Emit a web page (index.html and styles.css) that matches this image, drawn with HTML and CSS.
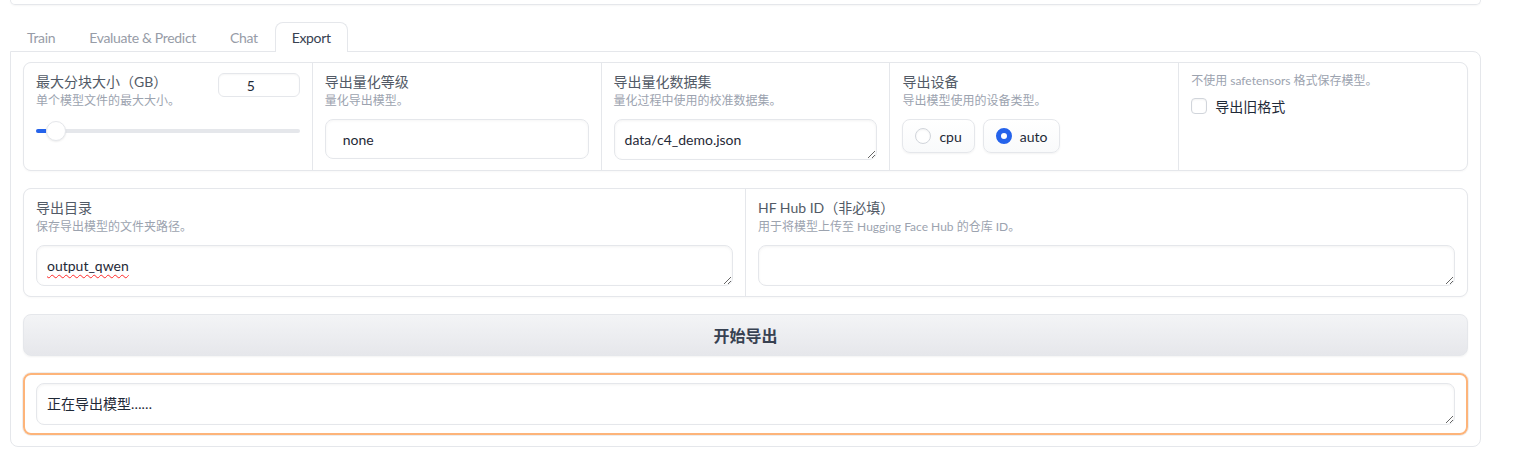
FILE: index.html
```html
<!DOCTYPE html>
<html lang="zh-CN">
<head>
<meta charset="utf-8">
<title>Export</title>
<link rel="stylesheet" href="styles.css">
</head>
<body>
<div class="app">
  <div class="prev-block"></div>
  <div class="tabs">
    <div class="tab-nav">
      <div class="tab">Train</div>
      <div class="tab">Evaluate &amp; Predict</div>
      <div class="tab">Chat</div>
      <div class="tab selected">Export</div>
    </div>
    <div class="tab-panel">
      <div class="form form-5">
        <div class="cell">
          <div class="slider-head">
            <div>
              <div class="label">最大分块大小（GB）</div>
              <div class="info">单个模型文件的最大大小。</div>
            </div>
            <div class="num">5</div>
          </div>
          <div class="slider">
            <div class="track"><div class="fill" style="width:10px"></div></div>
            <div class="thumb" style="left:10px"></div>
          </div>
        </div>
        <div class="cell">
          <div class="label">导出量化等级</div>
          <div class="info">量化导出模型。</div>
          <div class="dropdown">none</div>
        </div>
        <div class="cell">
          <div class="label">导出量化数据集</div>
          <div class="info">量化过程中使用的校准数据集。</div>
          <div class="textarea">data/c4_demo.json</div>
        </div>
        <div class="cell">
          <div class="label">导出设备</div>
          <div class="info">导出模型使用的设备类型。</div>
          <div class="radio-group">
            <div class="radio-opt"><span class="radio"></span><span>cpu</span></div>
            <div class="radio-opt"><span class="radio checked"></span><span>auto</span></div>
          </div>
        </div>
        <div class="cell">
          <div class="info">不使用 safetensors 格式保存模型。</div>
          <div class="check-row"><span class="checkbox"></span><span class="check-label">导出旧格式</span></div>
        </div>
      </div>

      <div class="form form-2">
        <div class="cell">
          <div class="label">导出目录</div>
          <div class="info">保存导出模型的文件夹路径。</div>
          <div class="textarea"><span class="misspelled">output_qwen</span></div>
        </div>
        <div class="cell">
          <div class="label">HF Hub ID（非必填）</div>
          <div class="info">用于将模型上传至 Hugging Face Hub 的仓库 ID。</div>
          <div class="textarea"></div>
        </div>
      </div>

      <div class="btn">开始导出</div>

      <div class="output-block">
        <div class="textarea tall">正在导出模型……</div>
      </div>
    </div>
  </div>
</div>
</body>
</html>
```
FILE: styles.css
```css
* { box-sizing: border-box; }

body {
  margin: 0;
  background: #ffffff;
  font-family: "Source Sans Pro", Lato, "Noto Sans CJK SC", sans-serif;
  color: #1f2937;
  font-size: 14px;
}

.app {
  margin-left: 10px;
  width: 1471px;
}

.prev-block {
  height: 5px;
  border: 1px solid #e5e7eb;
  border-top: none;
  border-radius: 0 0 8px 8px;
  box-shadow: 0 1px 2px rgba(0, 0, 0, 0.04);
}

.tab-nav {
  display: flex;
  margin-top: 17px;
}

.tab {
  position: relative;
  z-index: 1;
  height: 30px;
  margin-bottom: -1px;
  padding: 0 16px 1px;
  border: 1px solid transparent;
  border-bottom: none;
  border-radius: 8px 8px 0 0;
  display: flex;
  align-items: center;
  font-size: 14px;
  letter-spacing: -0.33px;
  color: #979ca7;
  background: transparent;
}

.tab.selected {
  border-color: #e5e7eb;
  background: #ffffff;
  color: #374151;
}

.tab-panel {
  border: 1px solid #e5e7eb;
  border-radius: 0 8px 8px 8px;
  padding: 10px 12px 11px;
  display: flex;
  flex-direction: column;
  gap: 17px;
}

.form {
  display: grid;
  gap: 1px;
  background: #e5e7eb;
  border: 1px solid #e5e7eb;
  border-radius: 8px;
  overflow: hidden;
  box-shadow: 0 1px 2px rgba(0, 0, 0, 0.03);
}

.form-5 { grid-template-columns: repeat(5, 1fr); }
.form-2 { grid-template-columns: repeat(2, 1fr); }

.cell {
  background: #ffffff;
  padding: 9px 12px 10px;
  min-width: 0;
}

.label {
  font-size: 14px;
  line-height: 20px;
  color: #525a66;
}

.info {
  font-size: 12px;
  line-height: 18px;
  color: #9ca3af;
}

.slider-head {
  display: flex;
  justify-content: space-between;
  align-items: flex-start;
}

.num {
  width: 82px;
  height: 24px;
  margin-top: 1px;
  padding-right: 16px;
  border: 1px solid #e5e7eb;
  border-radius: 6px;
  display: flex;
  align-items: center;
  justify-content: center;
  font-size: 14px;
  color: #1f2937;
  box-shadow: inset 0 1px 2px rgba(0, 0, 0, 0.04);
}

.slider {
  position: relative;
  height: 42px;
  display: flex;
  align-items: center;
}

.track {
  width: 100%;
  height: 4px;
  border-radius: 2px;
  background: #e5e7eb;
  display: flex;
}

.fill {
  height: 4px;
  border-radius: 2px 0 0 2px;
  background: #2563eb;
}

.thumb {
  position: absolute;
  top: 11px;
  width: 20px;
  height: 20px;
  border-radius: 50%;
  background: #ffffff;
  border: 1px solid #e5e7eb;
  box-shadow: 0 1px 2px rgba(0, 0, 0, 0.08);
}

.dropdown {
  margin-top: 9px;
  height: 40px;
  border: 1px solid #e5e7eb;
  border-radius: 8px;
  padding: 0 17px;
  display: flex;
  align-items: center;
  font-size: 14px;
  color: #1f2937;
  box-shadow: inset 0 1px 3px rgba(0, 0, 0, 0.04);
}

.textarea {
  margin-top: 9px;
  height: 41px;
  border: 1px solid #e5e7eb;
  border-radius: 8px;
  padding: 10px 10px;
  font-size: 14px;
  line-height: 20px;
  color: #1f2937;
  resize: vertical;
  overflow: hidden;
  white-space: nowrap;
  box-shadow: inset 0 1px 3px rgba(0, 0, 0, 0.05);
}

.textarea.tall {
  margin-top: 0;
  height: 42px;
}

.misspelled {
  text-decoration: underline wavy #ff2a2a;
  text-decoration-thickness: 1px;
  text-underline-offset: 3px;
}

.radio-group {
  margin-top: 9px;
  display: flex;
  gap: 8px;
}

.radio-opt {
  height: 34px;
  padding: 0 12px;
  border: 1px solid #e5e7eb;
  border-radius: 8px;
  background: linear-gradient(to bottom, #ffffff, #f9fafb);
  box-shadow: 0 1px 2px rgba(0, 0, 0, 0.05);
  display: flex;
  align-items: center;
  gap: 8px;
  font-size: 14px;
  color: #1f2937;
}

.radio {
  width: 16px;
  height: 16px;
  border-radius: 50%;
  border: 1px solid #d1d5db;
  background: #ffffff;
  box-shadow: inset 0 1px 2px rgba(0, 0, 0, 0.05);
}

.radio.checked {
  border: 5px solid #2563eb;
  box-shadow: none;
}

.check-row {
  margin-top: 6px;
  height: 20px;
  display: flex;
  align-items: center;
  gap: 8px;
}

.checkbox {
  width: 16px;
  height: 16px;
  border: 1px solid #d1d5db;
  border-radius: 4px;
  background: #ffffff;
  box-shadow: inset 0 1px 2px rgba(0, 0, 0, 0.05);
}

.check-label {
  font-size: 14px;
  color: #1f2937;
}

.btn {
  height: 42px;
  border: 1px solid #e5e7eb;
  border-radius: 8px;
  background: linear-gradient(to bottom, #f3f4f6, #e6e7eb);
  box-shadow: 0 1px 2px rgba(0, 0, 0, 0.05);
  display: flex;
  align-items: center;
  justify-content: center;
  font-size: 16px;
  font-weight: 700;
  color: #374151;
}

.output-block {
  border: 2px solid #fdb47a;
  border-radius: 8px;
  padding: 8px 11px;
  box-shadow: 0 0 0 1px #eeeeee;
}
```
